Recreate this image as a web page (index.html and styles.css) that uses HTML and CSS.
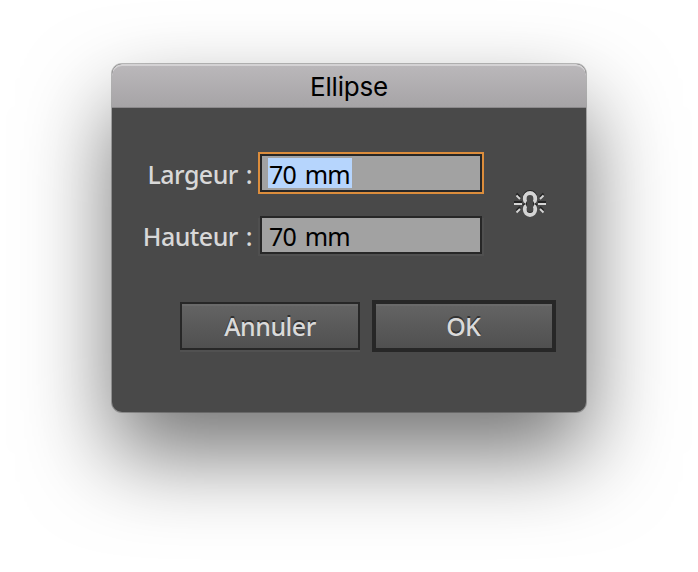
FILE: index.html
```html
<!DOCTYPE html>
<html lang="fr">
<head>
<meta charset="utf-8">
<title>Ellipse</title>
<link rel="stylesheet" href="styles.css">
</head>
<body>
<main class="dialog">
  <header class="titlebar"><h1 class="title">Ellipse</h1></header>
  <div class="content">
    <div class="fields">
      <div class="rows">
        <div class="row"><span class="label">Largeur :</span><div class="input focused"><span class="value selected">70 mm</span></div></div>
        <div class="row"><span class="label">Hauteur :</span><div class="input"><span class="value">70 mm</span></div></div>
      </div>
      <svg class="link" width="36" height="36" viewBox="0 0 36 36" fill="none">
        <g stroke="#242424">
          <path d="M12.700 16.500v-4.500a5.300 5.300 0 0 1 10.600 0v4.500M12.700 19v4.500a5.300 5.300 0 0 0 10.600 0V19M12 17.800h3M21 17.800h3" stroke-width="3.600"/>
          <path d="M2 17h8M26 17h8M4.500 8.500l3.500 3.500M31.500 8.500l-3.500 3.500M8 22l-3.500 3.500M28 22l3.500 3.500" stroke-width="2"/>
        </g>
        <g stroke="#d4d4d4">
          <path d="M14.300 17.200c-1-.5-1.500-1.200-1.500-2.500v-1.500a5.200 5.200 0 0 1 10.400 0v1.500c0 1.300-.5 2-1.500 2.500M14.300 20.800c-1 .5-1.500 1.200-1.500 2.500v1.500a5.200 5.200 0 0 0 10.400 0v-1.500c0-1.300-.5-2-1.500-2.500" stroke-width="3.800"/>
          <path d="M2 19h8M26 19h8M4.500 10.500l3.500 3.500M31.500 10.500l-3.500 3.500M8 24l-3.500 3.500M28 24l3.500 3.500" stroke-width="1.800"/>
        </g>
      </svg>
    </div>
    <div class="actions">
      <button class="button cancel">Annuler</button>
      <button class="button ok">OK</button>
    </div>
  </div>
</main>
</body>
</html>
```
FILE: styles.css
```css
* { box-sizing: border-box; }
body { margin: 0; padding: 64px 112px 0; height: 572px; overflow: hidden; background: #fff; }
.dialog {
  width: 474px; height: 348px; border-radius: 10px; background: #494949; overflow: hidden;
  box-shadow: 0 0 0 1px rgba(0,0,0,.25), 0 42px 88px rgba(0,0,0,.55);
}
.titlebar {
  height: 44px; display: flex; justify-content: center; border-bottom: 1px solid #8b898b;
  border-radius: 10px 10px 0 0;
  background: linear-gradient(#bbb8bb, #a6a4a6); box-shadow: inset 0 2px 0 #d4d2d4;
}
.title { margin: 0; font: 400 26px/45px Inter, "Liberation Sans", sans-serif; letter-spacing: -.2px; color: #000; }
.content { padding: 46px 30px 0 0; font-family: "Noto Sans", "Open Sans", sans-serif; font-size: 25px; }
.fields { display: flex; align-items: center; }
.rows { display: flex; flex-direction: column; gap: 24px; }
.row { display: flex; width: 370px; height: 38px; justify-content: flex-end; }
.label { padding-right: 8px; line-height: 41px; color: #d8d8d8; font-weight: 500; white-space: nowrap; letter-spacing: -.55px; word-spacing: 2px; }
.input {
  flex: none; width: 222px; height: 38px; border: 2px solid #272727; background: #a2a2a2;
  padding: 2px 6px; color: #000; box-shadow: 0 2px 0 #515151, -2px 2px 0 #4f4f4f, 2px 2px 0 #4f4f4f;
}
.focused { box-shadow: 0 0 0 2px #dc8d3c; }
.value { display: block; width: 84px; height: 30px; padding-left: 1px; line-height: 33px; white-space: nowrap; letter-spacing: -.8px; word-spacing: 3px; }
.selected { background: #b6d5fd; }
.link { margin: 0 0 2px 30px; }
.actions { display: flex; justify-content: flex-end; align-items: center; gap: 12px; margin-top: 46px; }
.button {
  margin: 0; padding: 0; border-radius: 0; font: 500 25px/1 "Noto Sans", "Open Sans", sans-serif;
  letter-spacing: -.5px; color: #dadada; text-shadow: 0 -2px 0 #333; background: linear-gradient(#646464, #505050);
}
.cancel { width: 180px; height: 48px; border: 2px solid #272727; box-shadow: inset 0 2px 0 #6a6a6a, 0 2px 0 #515151; }
.ok { width: 184px; height: 52px; padding-right: 2px; border: 4px solid #272727; box-shadow: inset 0 2px 0 #6a6a6a; letter-spacing: -1px; }
```
